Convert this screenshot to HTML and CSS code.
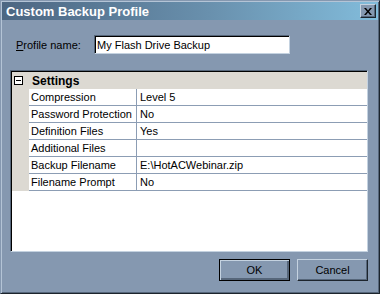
FILE: index.html
```html
<!DOCTYPE html>
<html lang="en">
<head>
<meta charset="UTF-8">
<link rel="stylesheet" href="styles.css">
<title>Custom Backup Profile</title>
</head>
<body>
<div class="window">
  <div class="titlebar">
    <span class="title">Custom Backup Profile</span>
    <button class="close-btn" aria-label="Close">
      <svg width="8" height="7" viewBox="0 0 8 7"><path d="M0 0h2l2 2.5L6 0h2L5 3.5 8 7H6L4 4.5 2 7H0l3-3.5z" fill="#000"/></svg>
    </button>
  </div>
  <div class="body">
    <div class="name-row">
      <label class="name-label" for="profile-name"><u>P</u>rofile name:</label>
      <input class="name-input" id="profile-name" type="text" value="My Flash Drive Backup">
    </div>

    <div class="grid">
      <div class="cat-row">
        <span class="toggle"></span>
        <span class="cat-name">Settings</span>
      </div>
      <div class="prop-row"><span class="gutter"></span><span class="prop-name">Compression</span><span class="prop-value">Level 5</span></div>
      <div class="prop-row"><span class="gutter"></span><span class="prop-name">Password Protection</span><span class="prop-value">No</span></div>
      <div class="prop-row"><span class="gutter"></span><span class="prop-name">Definition Files</span><span class="prop-value">Yes</span></div>
      <div class="prop-row"><span class="gutter"></span><span class="prop-name">Additional Files</span><span class="prop-value"></span></div>
      <div class="prop-row"><span class="gutter"></span><span class="prop-name">Backup Filename</span><span class="prop-value">E:\HotACWebinar.zip</span></div>
      <div class="prop-row"><span class="gutter"></span><span class="prop-name">Filename Prompt</span><span class="prop-value">No</span></div>
    </div>

    <div class="buttons">
      <button class="btn default">OK</button>
      <button class="btn">Cancel</button>
    </div>
  </div>
</div>
</body>
</html>
```

FILE: styles.css
```css
html, body {margin: 0; padding: 0; overflow: hidden;}
body {font-family: 'Liberation Sans', Arial, sans-serif; font-size: 11px; color: #000; background: #8598b0;}

.window {
  width: 380px; height: 294px; box-sizing: border-box; padding: 1px;
  background: #8598b0;
  border: 1px solid; border-color: #8598b0 #1c242c #1c242c #8598b0;
  box-shadow: inset 1px 1px 0 #b4c4d6, inset -1px -1px 0 #56667a;
  display: flex; flex-direction: column;
}

.titlebar {
  height: 18px; display: flex; align-items: center; justify-content: space-between;
  padding: 0 2px 0 4px;
  background: linear-gradient(to right, #4c6682 0%, #6990ad 55%, #82bcdb 100%);
}
.title {color: #fff; font-weight: bold; font-size: 13px;}
.close-btn {
  width: 16px; height: 14px; padding: 0; margin: 0;
  display: flex; align-items: center; justify-content: center;
  background: #8598b0;
  border: 1px solid; border-color: #c4d2e0 #1c242c #1c242c #c4d2e0;
  box-shadow: inset -1px -1px 0 #56667a;
}

.body {flex: 1; display: flex; flex-direction: column; padding: 15px 10px 0 8px;}

.name-row {display: flex; align-items: center; height: 19px; padding-left: 6px;}
.name-label {width: 78px;}
.name-input {
  width: 196px; height: 19px; box-sizing: border-box; margin: 0; padding: 1px 2px 0;
  font: 11px 'Liberation Sans', Arial, sans-serif; color: #000; background: #fff;
  border: 1px solid; border-color: #56667a #c4d2e0 #c4d2e0 #56667a;
  box-shadow: inset 1px 1px 0 #000;
  outline: none;
}

.grid {
  margin-top: 16px; height: 182px; box-sizing: border-box; background: #fff;
  border: 1px solid; border-color: #56667a #c4d2e0 #c4d2e0 #56667a;
  box-shadow: inset 1px 1px 0 #000;
  padding: 1px 0 0 1px;
}
.cat-row {
  height: 17px; display: flex; align-items: center; background: #dcd9d2;
}
.toggle {
  width: 7px; height: 7px; margin: 0 9px 0 2px; border: 1px solid #000; background: #fff;
  position: relative;
}
.toggle::after {content: ""; position: absolute; left: 1px; top: 3px; width: 5px; height: 1px; background: #000;}
.cat-name {font-weight: bold; font-size: 12px;}

.prop-row {display: flex; height: 17px;}
.gutter {width: 17px; background: #dcd9d2; flex: none;}
.prop-name, .prop-value {
  box-sizing: border-box; height: 17px; line-height: 16px; padding-left: 2px;
  border-bottom: 1px solid #8c9db4; white-space: nowrap;
}
.prop-name {width: 108px; border-right: 1px solid #8c9db4; flex: none;}
.prop-value {flex: 1; padding-left: 3px;}

.buttons {display: flex; justify-content: flex-end; gap: 7px; margin-top: 7px;}
.btn {
  width: 71px; height: 22px; box-sizing: border-box; margin: 0; padding: 0;
  font: 11px 'Liberation Sans', Arial, sans-serif; color: #000; background: #8598b0;
  border: 1px solid; border-color: #c4d2e0 #1c242c #1c242c #c4d2e0;
  box-shadow: inset -1px -1px 0 #56667a;
}
.btn.default {
  border-color: #000;
  box-shadow: inset 1px 1px 0 #c4d2e0, inset -2px -2px 0 #56667a;
}
```
